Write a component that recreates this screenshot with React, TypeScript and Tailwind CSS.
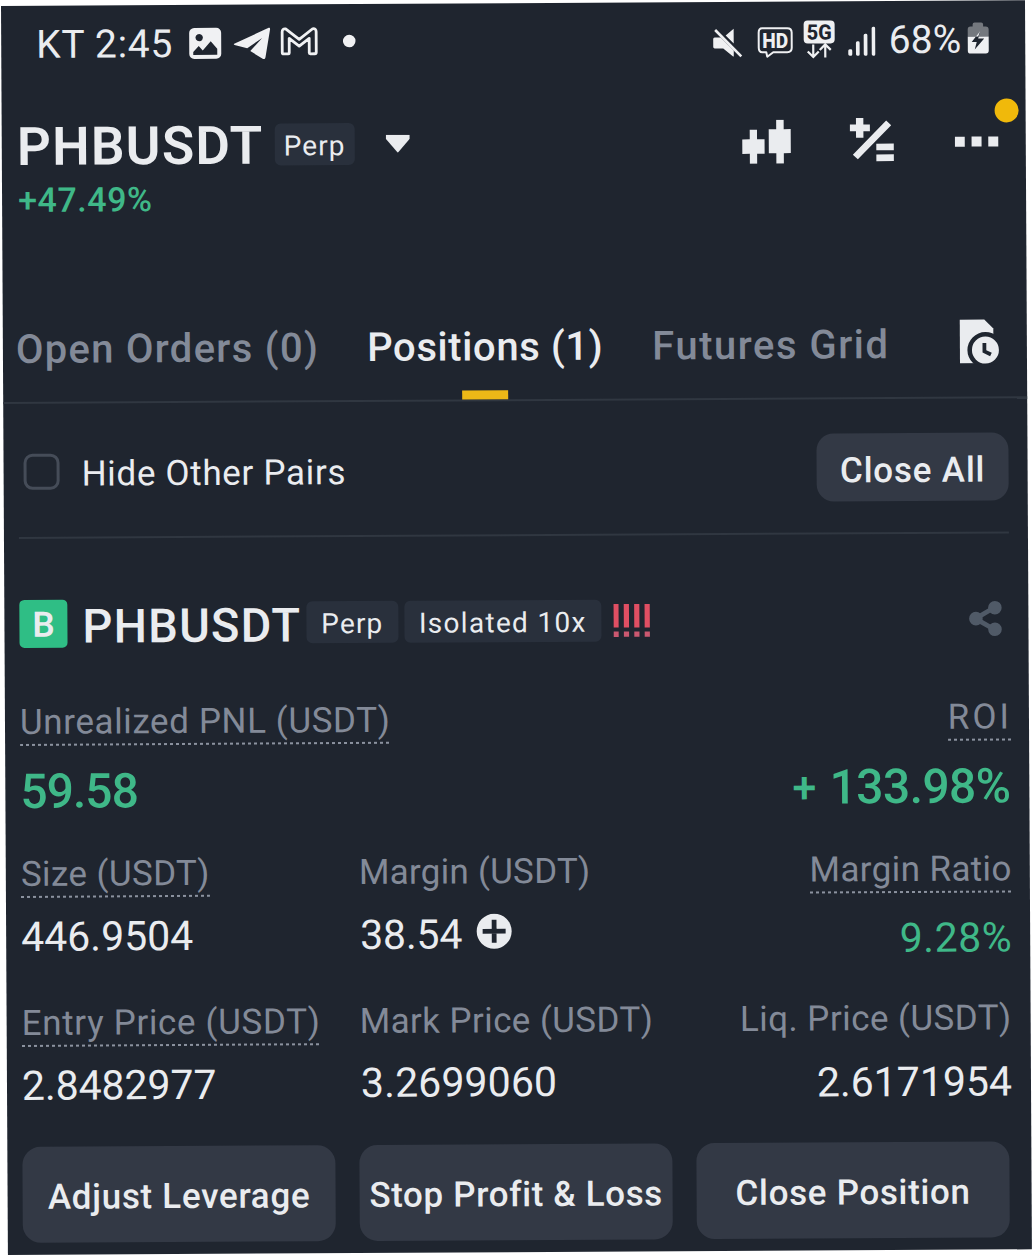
import React from 'react';

function StatusLeftIcons() {
  return (
    <svg className="ml-[15px] h-[36px] w-[168px]" viewBox="189 25 168 36" fill="#f0f1f3">
      <path
        fillRule="evenodd"
        d="M195 28h22a5 5 0 0 1 5 5v21a5 5 0 0 1-5 5h-22a5 5 0 0 1-5-5V33a5 5 0 0 1 5-5zM200 34a3.700 3.700 0 1 0 .01 0zM194 55h24v-6l-6.500-7.500-8 9-4-4.500-5.500 6z"
      />
      <path d="M235 44l34-15.500c1.500-.6 2.200 0 1.900 1.600l-4.700 27.500c-.4 2-1.600 2.400-3.200 1.300L251 51.500l12-13-15 10-12.700-3.300c-.9-.3-.9-.8-.3-1.200z" />
      <path
        d="M283 32.500q0-3.500 3.500-3L300 40l13.500-10.500q3.500-.5 3.500 3V53q0 1.500-1.500 1.500h-4.500q-1 0-1-1V39l-10 7.800L290 39v14.500q0 1-1 1h-4.500q-1.500 0-1.500-1.500z"
        fill="none"
        stroke="#f0f1f3"
        strokeWidth="2.800"
        strokeLinejoin="round"
      />
      <circle cx="350" cy="42" r="6.300" />
    </svg>
  );
}

function StatusRightIcons() {
  return (
    <svg className="h-[40px] w-[166px]" viewBox="711 17 166 40" fill="#eff0f2">
      <path d="M713 36q0-1.500 1.500-1.500h6l13 13V53q0 1-1 .3L723 45.500h-8.500q-1.500 0-1.500-1.500zM725.500 32.500l8-6.700V40.500z" />
      <path d="M715 27l26 26.500" stroke="#eff0f2" strokeWidth="2.600" />
      <path
        d="M762 25.500h25q4.500 0 4.500 4.500V45q0 4.500-4.500 4.500h-14l-6 4.500-1-4.500h-4q-3.500 0-3.500-4.500V30q0-4.500 3.500-4.500z"
        fill="none"
        stroke="#eff0f2"
        strokeWidth="2"
        strokeLinejoin="round"
      />
      <text x="775" y="45.200" textAnchor="middle" fontFamily="Roboto" fontWeight="800" fontSize="21" textLength="26" lengthAdjust="spacingAndGlyphs">
        HD
      </text>
      <rect x="803.500" y="18" width="31" height="23" rx="4" />
      <text x="819" y="37" textAnchor="middle" fontFamily="Roboto" fontWeight="800" fontSize="21" fill="#1f252f" textLength="25" lengthAdjust="spacingAndGlyphs">
        5G
      </text>
      <path d="M813 42v12M807.500 49l5.500 5.500 5.500-5.500M825 55V43M819.500 47.500l5.500-5.500 5.500 5.500" fill="none" stroke="#eff0f2" strokeWidth="2.200" />
      <rect x="848" y="47" width="4" height="6.500" rx="1.500" />
      <rect x="855.700" y="39" width="3.700" height="14.500" rx="1.500" />
      <rect x="863.500" y="31.500" width="3.700" height="22" rx="1.500" />
      <rect x="871.500" y="24.500" width="3.500" height="29" rx="1.500" />
    </svg>
  );
}

function BatteryIcon() {
  return (
    <svg className="ml-[6px] h-[34px] w-[22px]" viewBox="0 0 22 34">
      <path d="M5.500 5V3q0-2 2-2h6.500q2 0 2 2v2h2.500q3 0 3 3v7H.5V8q0-3 3-3z" fill="#74787e" />
      <path d="M.5 15h21v14q0 3-3 3h-15q-3 0-3-3z" fill="#eff0f2" />
      <path d="M13 9.500L4.500 20.500h5l-2 7.500L17 17h-6z" fill="#1f252f" />
      <path d="M13 9.500L8.700 15H11z" fill="#eff0f2" />
    </svg>
  );
}

function CandlesIcon() {
  return (
    <svg className="h-[44px] w-[50px]" viewBox="0 0 50 44" fill="#eaecef">
      <path d="M.5 19.500h7.500V10h7.300v9.500h7.500V34h-7.500v10H8V34H.5zM27 9.500h7.500V0h7.500v9.500H49V33.500h-7V44h-7.500V33.500H27z" />
    </svg>
  );
}

function CalculatorIcon() {
  return (
    <svg className="-mt-[2px] ml-[58px] h-[46px] w-[46px]" viewBox="0 0 46 46" fill="#eaecef">
      <path d="M6.300.8h7.400v6.500h6.500V14h-6.500v6.500H6.300V14H0V7.300h6.300zM3 37.500L36.500 3.500l5 4.800L8 42zM26.500 26.500H44v6.700H26.500zM26.500 37.300H44V44H26.500z" />
    </svg>
  );
}

function MoreIcon() {
  return (
    <svg className="ml-[59px] mt-[2px] h-[12px] w-[45px]" viewBox="0 0 45 12" fill="#eaecef">
      <path d="M0 1h10v10H0zM16.800 1h10v10h-10zM33.500 1h10v10h-10z" />
    </svg>
  );
}

function HistoryIcon() {
  return (
    <svg className="ml-auto mr-px h-[46px] w-[41px]" viewBox="0 0 41 46">
      <path d="M1 1h24.500l9 9v34.500H1z" fill="#eaecef" />
      <circle cx="26.500" cy="31.500" r="18" fill="#1f252f" />
      <circle cx="26.500" cy="31.500" r="13.500" fill="#eaecef" />
      <path d="M25.500 24.500v8.300l6.500 3.200" fill="none" stroke="#1f252f" strokeWidth="3.800" />
    </svg>
  );
}

function RiskBars() {
  return (
    <svg className="ml-[12px] h-[34px] w-[38px]" viewBox="0 0 38 34" fill="#e04f63">
      <path d="M0 .5h5.200V24H0zM10.400.5h5.200V24h-5.200zM20.800.5H26V24h-5.200zM31.200.5h5.200V24h-5.200z" />
      <path d="M0 28h5.200v5.300H0zM10.400 28h5.200v5.300h-5.200zM20.800 28H26v5.300h-5.200zM31.200 28h5.200v5.300h-5.200z" fill="#cb5870" />
    </svg>
  );
}

function ShareIcon() {
  return (
    <svg className="ml-auto h-[36px] w-[34px]" viewBox="0 0 34 36" fill="#505a67">
      <path d="M26 7L7 18l19 11" fill="none" stroke="#505a67" strokeWidth="4.800" />
      <circle cx="7.500" cy="18" r="6.800" />
      <circle cx="26.500" cy="7.200" r="6.800" />
      <circle cx="26.500" cy="28.800" r="6.800" />
    </svg>
  );
}

function PlusCircle() {
  return (
    <svg className="-mt-[4px] ml-[14px] h-[36px] w-[36px]" viewBox="0 0 36 36">
      <circle cx="18" cy="18" r="17.500" fill="#eaecef" />
      <path d="M18 6.500v23M6.500 18h23" stroke="#1f252f" strokeWidth="4.800" />
    </svg>
  );
}

/** Metric caption; `hint` adds the dashed underline of captions that open an explanation. */
function Label({ children, hint = false, spacing = 'tracking-[0.600px]' }: { children: string; hint?: boolean; spacing?: string }) {
  return (
    <span
      className={`block h-[50px] w-fit whitespace-nowrap text-[35px] leading-[53px] text-[#838a98] ${spacing} ${
        hint
          ? 'bg-[repeating-linear-gradient(90deg,#8b929f_0_3px,transparent_3px_6px)] bg-[length:100%_2px] bg-[position:left_bottom] bg-no-repeat'
          : ''
      }`}
    >
      {children}
    </span>
  );
}

function Action({ children, spacing }: { children: string; spacing: string }) {
  return (
    <button className={`h-[96px] whitespace-nowrap rounded-[18px] bg-[#333945] pt-[5px] text-[35px] font-medium leading-none ${spacing}`}>
      {children}
    </button>
  );
}

export default function App() {
  return (
    <div className="h-[1256px] w-[1032px] overflow-hidden bg-white pl-px pt-[6px] font-['Roboto',sans-serif] text-[#eaecef]">
      <div className="relative h-[1249px] w-[1024px] origin-top-left -rotate-[0.318deg] bg-[#1f252f]">
        <header className="flex h-[76px] items-center whitespace-nowrap pl-[35px] text-[39px]">
          <span className="mt-[2px] tracking-[0.700px]">KT 2:45</span>
          <StatusLeftIcons />
          <div className="ml-auto mr-[36px] flex items-center">
            <StatusRightIcons />
            <span className="ml-[12px] mt-[2px]">68%</span>
            <BatteryIcon />
          </div>
        </header>

        <div className="mt-[36px] flex h-[56px] items-center pl-[15px] pr-[26px]">
          <h1 className="mt-[2px] text-[53px] font-semibold leading-[56px] tracking-[1.270px]">PHBUSDT</h1>
          <span className="ml-[11px] h-[42px] w-[80px] rounded-[6px] bg-[#29303c] text-center text-[28px] leading-[46px] tracking-[1.100px]">Perp</span>
          <svg className="ml-[31px] h-[18px] w-[24px]" viewBox="0 0 24 18" fill="#eaecef">
            <path d="M0 0h24v4L12 18 0 4z" />
          </svg>
          <div className="ml-auto flex items-center">
            <CandlesIcon />
            <CalculatorIcon />
            <MoreIcon />
          </div>
        </div>
        <span className="absolute left-[993px] top-[98px] size-[24px] rounded-full bg-[#f0b90b]" />
        <p className="mt-[5px] h-[40px] pl-[16px] text-[34px] font-medium leading-[42px] tracking-[0.560px] text-[#3fb888]">+47.49%</p>

        <nav className="mt-[83px] flex h-[102px] items-center whitespace-nowrap border-b-2 border-[#303741] pl-[13px] pr-[26px] text-[40px] font-medium text-[#838a98]">
          <span className="-mt-[4px] tracking-[1.270px]">Open Orders (0)</span>
          <div className="relative ml-[48px] flex h-full items-center text-[#eaecef]">
            <span className="-mt-[4px] tracking-[0.600px]">Positions (1)</span>
            <span className="absolute bottom-0 left-1/2 h-[9px] w-[46px] -translate-x-1/2 bg-[#ecb817]" />
          </div>
          <span className="-mt-[4px] ml-[49px] tracking-[1.500px]">Futures Grid</span>
          <div className="-mt-[10px] ml-auto">
            <HistoryIcon />
          </div>
        </nav>

        <div className="ml-[15px] mr-[19px] flex h-[135px] items-center border-b-2 border-[#303741] pt-[3px]">
          <span className="ml-[5px] size-[36px] rounded-[9px] border-[3px] border-[#454c58]" />
          <span className="ml-[22px] mt-[7px] text-[35px] tracking-[0.680px]">Hide Other Pairs</span>
          <button className="ml-auto h-[68px] w-[192px] rounded-[17px] bg-[#333945] pt-[7px] text-[35px] font-medium leading-none tracking-[0.800px]">
            Close All
          </button>
        </div>

        <div className="mt-[57px] flex h-[56px] items-center whitespace-nowrap pl-[15px] pr-[26px]">
          <span className="flex size-[48px] items-center justify-center rounded-[5px] bg-[#2fbe85] pt-[4px] text-[35px] font-semibold">B</span>
          <h2 className="ml-[15px] mt-[6px] text-[47px] font-medium leading-[56px] tracking-[1.200px]">PHBUSDT</h2>
          <span className="ml-[5px] h-[42px] w-[92px] rounded-[6px] bg-[#29303c] text-center text-[28px] leading-[46px] tracking-[1.100px]">Perp</span>
          <span className="ml-[6px] h-[42px] w-[197px] rounded-[6px] bg-[#29303c] text-center text-[28px] leading-[46px] tracking-[1.300px]">
            Isolated 10x
          </span>
          <RiskBars />
          <ShareIcon />
        </div>

        <section className="mt-[44px] pl-[15px] pr-[17px]">
          <div className="flex justify-between">
            <Label hint>Unrealized PNL (USDT)</Label>
            <Label hint spacing="tracking-[3px]">ROI</Label>
          </div>
          <div className="mt-[16px] flex h-[56px] justify-between text-[48px] font-medium leading-[60px] text-[#3fb888]">
            <span className="tracking-[-1px]">59.58</span>
            <span className="mr-[2px] flex tracking-[-0.620px]">
              <span className="mr-[14px] text-[43px]">+</span>133.98%
            </span>
          </div>
        </section>

        <section className="mt-[30px] grid grid-cols-[338px_1fr_auto] pl-[15px] pr-[18px]">
          <Label hint spacing="tracking-[0.400px]">Size (USDT)</Label>
          <Label spacing="tracking-[0.250px]">Margin (USDT)</Label>
          <Label hint spacing="tracking-[0.380px]">Margin Ratio</Label>
          <span className="mt-[13px] text-[41px] leading-[52px]">446.9504</span>
          <span className="mt-[13px] flex h-[50px] items-center pl-px text-[41px] leading-[48px]">
            <span className="mt-[2px] tracking-[-0.200px]">38.54</span>
            <PlusCircle />
          </span>
          <span className="mt-[19px] h-[44px] text-right text-[41px] leading-[52px] tracking-[0.500px] text-[#3fb888]">9.28%</span>
        </section>

        <section className="mt-[34px] grid grid-cols-[338px_1fr_auto] pl-[15px] pr-[19px]">
          <Label hint spacing="tracking-[0.650px]">Entry Price (USDT)</Label>
          <Label spacing="tracking-[0.390px]">Mark Price (USDT)</Label>
          <Label spacing="tracking-[0.440px]">Liq. Price (USDT)</Label>
          <span className="mt-[13px] h-[48px] text-[41px] leading-[52px] tracking-[-0.100px]">2.8482977</span>
          <span className="mt-[12px] h-[49px] pl-px text-[41px] leading-[52px] tracking-[0.110px]">3.2699060</span>
          <span className="mt-[14px] h-[47px] text-right text-[41px] leading-[52px]">2.6171954</span>
        </section>

        <div className="mt-[39px] grid grid-cols-3 gap-[24px] pl-[15px] pr-[22px]">
          <Action spacing="tracking-[0.690px]">Adjust Leverage</Action>
          <Action spacing="tracking-[0.620px]">Stop Profit &amp; Loss</Action>
          <Action spacing="tracking-[0.660px]">Close Position</Action>
        </div>
      </div>
    </div>
  );
}
